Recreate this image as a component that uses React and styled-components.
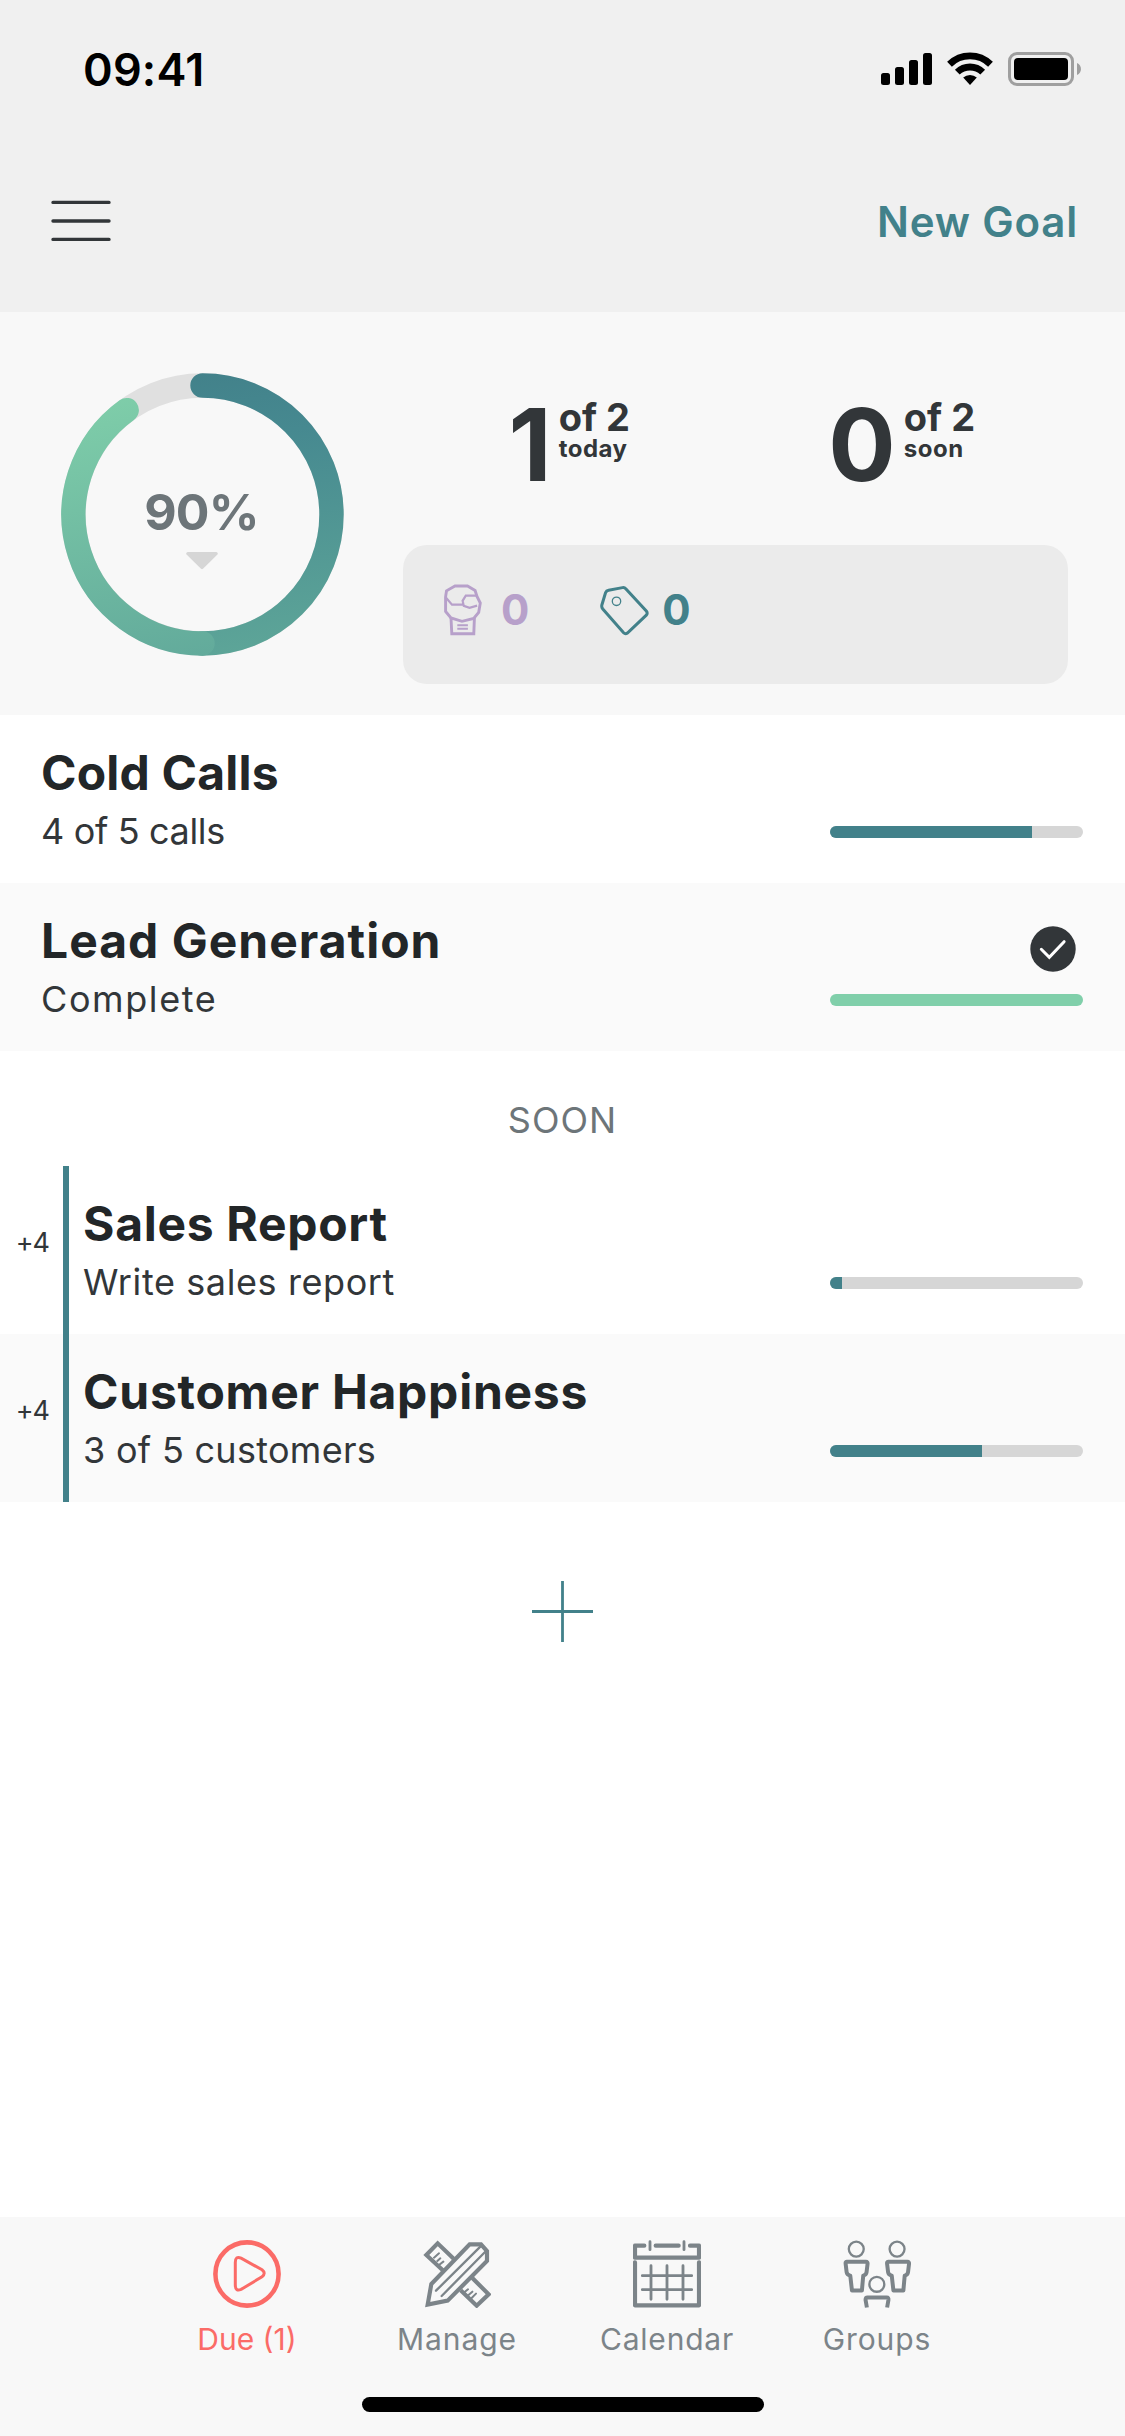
import React from 'react';
import styled, { createGlobalStyle } from 'styled-components';

const teal = '#42818a';
const green = '#80cfaa';

const today = [
  { title: 'Cold Calls', detail: '4 of 5 calls', progress: 80, spacing: 0.2, detailSpacing: -0.35 },
  { title: 'Lead Generation', detail: 'Complete', progress: 100, spacing: 1, detailSpacing: 1.6 },
];

const soon = [
  { title: 'Sales Report', detail: 'Write sales report', progress: 4.7, days: '+4', spacing: 0.7, detailSpacing: 0.6 },
  { title: 'Customer Happiness', detail: '3 of 5 customers', progress: 60, days: '+4', spacing: 0.75, detailSpacing: 0.3 },
];

const StatusIcons = () => (
  <svg width="200" height="34" viewBox="0 0 200 34">
    <rect x="0" y="21" width="9" height="12" rx="2.5" />
    <rect x="14" y="15" width="9" height="18" rx="2.5" />
    <rect x="28" y="8" width="9" height="25" rx="2.5" />
    <rect x="42" y="1" width="9" height="32" rx="2.5" />
    <g fill="none" stroke="#000" strokeWidth="6.8">
      <path d="M68.5 12.3a29.3 29.3 0 0 1 41 0" />
      <path d="M76.3 20.1a18.3 18.3 0 0 1 25.4 0" />
    </g>
    <path d="M82.2 25.6a10.2 10.2 0 0 1 13.6 0L89 33z" />
    <rect x="128.5" y="1.5" width="63" height="31" rx="7.5" fill="none" stroke="#9f9f9f" strokeWidth="3" />
    <rect x="133" y="6" width="54" height="22" rx="4" />
    <path d="M196 11c5.3 2 5.3 10 0 12z" fill="#9f9f9f" />
  </svg>
);

const MenuIcon = () => (
  <svg width="60" height="42" viewBox="0 0 60 42" stroke="#323639" strokeWidth="3.4" strokeLinecap="round">
    <path d="M2 2.4h56M2 21h56M2 39.4h56" />
  </svg>
);

const Ring = () => (
  <svg width="283" height="283" viewBox="0 0 283 283" fill="none" strokeWidth="24.4" strokeLinecap="round">
    <defs>
      <linearGradient id="ringDown" gradientUnits="userSpaceOnUse" x1="120" y1="0" x2="160" y2="283">
        <stop offset="0" stopColor={teal} />
        <stop offset="0.25" stopColor="#468990" />
        <stop offset="1" stopColor="#5da598" />
      </linearGradient>
      <linearGradient id="ringUp" gradientUnits="userSpaceOnUse" x1="160" y1="283" x2="100" y2="0">
        <stop offset="0" stopColor="#62aa9b" />
        <stop offset="1" stopColor={green} />
      </linearGradient>
    </defs>
    <circle cx="141.5" cy="141.5" r="129" stroke="#e0e0e0" />
    <path d="M141.5 12.5a129 129 0 0 1 0 258" stroke="url(#ringDown)" />
    <path d="M141.5 270.5A129 129 0 0 1 65.7 37.1" stroke="url(#ringUp)" />
  </svg>
);

const Caret = () => (
  <svg width="32" height="18" viewBox="0 0 32 18" fill="#d6d6d6">
    <path d="M1.6 0h28.8q2.4 1 .8 2.8L17 16.8q-1 .8-2 0L.8 2.8Q-.8 1 1.6 0z" />
  </svg>
);

const GloveIcon = () => (
  <svg width="40" height="52" viewBox="0 0 40 52" fill="none" stroke="#b7a0ca" strokeWidth="2.9">
    <path d="M12 2h12.5l7.6 4.5L34 12.5l3.3 6.5-1.6 9.3-5 6.2L19 37.3 8 34l-5.4-6.6V12.8l.9-6z" />
    <path d="M8 34l.8 15.8h22L31.4 34" />
    <path d="M2.6 13.2L9 20.7h11.5M34 11.6H22.8l-3.2 5.2 1.2 5.1 5.7 1.9 7.6-2.2" strokeWidth="2.2" />
    <path d="M14.3 41.2h10.6M14.3 44.8h10.6" strokeWidth="1.9" />
  </svg>
);

const TagIcon = () => (
  <svg width="49" height="51" viewBox="0 0 49 51" fill="none" stroke={teal} strokeWidth="3">
    <path d="M8.6 5.2L22.5 2.6q2-.4 3.5 1.3L46.3 26q1.7 2.2 0 4.2L27.4 48q-2 1.6-3.8-.2L2.8 24q-1.4-1.7-1-3.8L5.6 7.6q.8-2 3-2.4z" />
    <circle cx="16.5" cy="16.3" r="4.2" strokeWidth="1.3" />
  </svg>
);

const CheckIcon = () => (
  <svg width="46" height="46" viewBox="0 0 46 46">
    <circle cx="23" cy="23" r="22.7" fill="#323639" />
    <path d="M11.3 23.3l8 8 14.8-15.6" fill="none" stroke="#fff" strokeWidth="3" strokeLinecap="round" />
  </svg>
);

const PlusIcon = () => (
  <svg width="61" height="61" viewBox="0 0 61 61" stroke={teal} strokeWidth="2.8">
    <path d="M30.5 0v61M0 30.5h61" />
  </svg>
);

const DueIcon = () => (
  <svg width="68" height="68" viewBox="0 0 68 68" fill="none" stroke="currentColor">
    <circle cx="34" cy="34" r="31.6" strokeWidth="4.6" />
    <path d="M22.3 22.5q0-7 5.8-4.4L49 29.8q4.4 3.4 0 7L28.1 49.4q-5.8 2.4-5.8-4.4z" strokeWidth="3" />
  </svg>
);

const ManageIcon = () => (
  <svg width="68" height="68" viewBox="17 14 204 204" fill="none" stroke="currentColor" strokeWidth="12.5">
    <path d="M78 106L27 59l34-35 48 46M130 165l48 46 36-34-49-49" />
    <path d="M157 27h34l18 20v30L91 196l-60 12 11-62z" />
    <path d="M56 166L189 34M73 182L206 47" strokeWidth="7" strokeLinecap="round" />
    <path d="M50 67l15-13M60 77l9-8M65 89l13-10M141 171l11-9M151 181l14-12M160 191l16-16" strokeWidth="6" strokeLinecap="round" />
  </svg>
);

const CalendarIcon = () => (
  <svg width="68" height="68" viewBox="221 91 204 204" fill="none" stroke="currentColor" strokeWidth="12.5" strokeLinecap="round" strokeLinejoin="round">
    <path d="M255 108h-28v36h192v-36h-27M289 108h69" />
    <path d="M227 158v129h192V158" />
    <path d="M272 96v24M374 96v24M275 168v101M323 168v101M371 168v101M249 198h148M249 240h148" strokeWidth="8.5" />
  </svg>
);

const GroupsIcon = () => (
  <svg width="68" height="68" viewBox="850 91 205 204" fill="none" stroke="currentColor" strokeWidth="12" strokeLinejoin="round">
    <g strokeWidth="7">
      <circle cx="890" cy="118" r="22.5" />
      <circle cx="1013" cy="118" r="22.5" />
      <circle cx="952" cy="224" r="22.5" />
    </g>
    <path d="M861 156h58q6 0 5 7l-3 25q-1 8-10 10l-4 45h-30l-5-45q-10-2-11-10l-3-25q-1-7 3-7z" />
    <path d="M986 156h58q6 0 5 7l-3 25q-1 8-10 10l-4 45h-30l-5-45q-10-2-11-10l-3-25q-1-7 3-7z" />
    <path d="M922 294l-4-23q0-7 6-7h58q6 0 5 7l-4 23" />
  </svg>
);

const tabs = [
  { label: 'Due (1)', icon: <DueIcon />, active: true, spacing: 0 },
  { label: 'Manage', icon: <ManageIcon />, spacing: 0.9 },
  { label: 'Calendar', icon: <CalendarIcon />, spacing: 0.8 },
  { label: 'Groups', icon: <GroupsIcon />, spacing: 0.9 },
];

const Goal = ({ goal, shaded }) => (
  <GoalRow $shaded={shaded}>
    {goal.days && <Days>{goal.days}</Days>}
    <GoalText $inset={goal.days ? 14 : 41}>
      <GoalTitle $spacing={goal.spacing}>{goal.title}</GoalTitle>
      <GoalDetail $spacing={goal.detailSpacing}>{goal.detail}</GoalDetail>
    </GoalText>
    <GoalStatus>
      {goal.progress === 100 && <CheckIcon />}
      <Track>
        <Fill $done={goal.progress === 100} style={{ width: `${goal.progress}%` }} />
      </Track>
    </GoalStatus>
  </GoalRow>
);

function App() {
  return (
    <Screen>
      <GlobalStyle />
      <Header>
        <StatusBar>
          <Time>09:41</Time>
          <StatusIcons />
        </StatusBar>
        <NavBar>
          <MenuIcon />
          <NewGoal>New Goal</NewGoal>
        </NavBar>
      </Header>

      <Summary>
        <RingWrap>
          <Ring />
          <RingLabel>
            <Percent>90%</Percent>
            <Caret />
          </RingLabel>
        </RingWrap>
        <Stats>
          <Counts>
            <Count $gap={7}>
              <Big>1</Big>
              <CountSide>
                <Total>of 2</Total>
                <When>today</When>
              </CountSide>
            </Count>
            <Count $gap={8}>
              <Big>0</Big>
              <CountSide>
                <Total>of 2</Total>
                <When>soon</When>
              </CountSide>
            </Count>
          </Counts>
          <Panel>
            <Badge $color="#b7a0ca" $gap={18}><GloveIcon />0</Badge>
            <Badge $color={teal} $gap={13}><TagIcon />0</Badge>
          </Panel>
        </Stats>
      </Summary>

      <List>
        {today.map((g, i) => <Goal key={g.title} goal={g} shaded={i % 2 === 1} />)}
        <SectionTitle>SOON</SectionTitle>
        {soon.map((g, i) => <Goal key={g.title} goal={g} shaded={i % 2 === 1} />)}
        <AddButton><PlusIcon /></AddButton>
      </List>

      <Footer>
        <Tabs>
          {tabs.map(t => (
            <Tab key={t.label} $active={t.active}>
              {t.icon}
              <TabLabel $spacing={t.spacing}>{t.label}</TabLabel>
            </Tab>
          ))}
        </Tabs>
        <HomeIndicator />
      </Footer>
    </Screen>
  );
}

export default App;

const GlobalStyle = createGlobalStyle`
  * {
    box-sizing: border-box;
  }
  body {
    margin: 0;
    background: #fff;
    font-family: Inter, "Liberation Sans", sans-serif;
  }
  svg {
    display: block;
    flex-shrink: 0;
  }
`;

const Screen = styled.div`
  width: 1125px;
  height: 2436px;
  display: flex;
  flex-direction: column;
  background: #fff;
  overflow: hidden;
`;

const Header = styled.header`
  height: 312px;
  background: #f0f0f0;
`;

const StatusBar = styled.div`
  height: 138px;
  padding: 0 44px 0 83px;
  display: flex;
  align-items: center;
  justify-content: space-between;
`;

const Time = styled.span`
  font-size: 45px;
  font-weight: 600;
  letter-spacing: 0.2px;
  color: #000;
`;

const NavBar = styled.nav`
  height: 174px;
  padding: 0 47px 8px 51px;
  display: flex;
  align-items: center;
  justify-content: space-between;
`;

const NewGoal = styled.a`
  padding-top: 1px;
  font-size: 42px;
  font-weight: 600;
  letter-spacing: 0.8px;
  color: ${teal};
`;

const Summary = styled.section`
  height: 403px;
  padding: 0 57px 0 61px;
  display: flex;
  gap: 59px;
  background: #f8f8f8;
`;

const RingWrap = styled.div`
  display: grid;
  margin-top: 61px;
  height: 283px;
  > * {
    grid-area: 1 / 1;
  }
`;

const RingLabel = styled.div`
  display: flex;
  flex-direction: column;
  align-items: center;
  padding: 109px 2px 0 0;
  gap: 10px;
`;

const Percent = styled.span`
  font-size: 50px;
  line-height: 60px;
  font-weight: 700;
  letter-spacing: -0.8px;
  color: #6d7579;
`;

const Stats = styled.div`
  flex: 1;
`;

const Counts = styled.div`
  display: flex;
  margin-top: 83px;
`;

const Count = styled.div`
  flex: 1;
  display: flex;
  justify-content: center;
  gap: ${({ $gap }) => $gap}px;
  color: #323639;
`;

const Big = styled.span`
  font-size: 100px;
  line-height: 100px;
  font-weight: 700;
`;

const CountSide = styled.div`
  display: flex;
  flex-direction: column;
  padding-top: 3px;
`;

const Total = styled.span`
  font-size: 38px;
  line-height: 38px;
  font-weight: 700;
`;

const When = styled.span`
  font-size: 24px;
  line-height: 26px;
  font-weight: 700;
  letter-spacing: 0.5px;
`;

const Panel = styled.div`
  height: 139px;
  margin-top: 50px;
  padding: 0 40px 9px;
  display: flex;
  align-items: center;
  gap: 71px;
  border-radius: 24px;
  background: #ebebeb;
`;

const Badge = styled.div`
  display: flex;
  align-items: center;
  gap: ${({ $gap }) => $gap}px;
  font-size: 42px;
  line-height: 52px;
  font-weight: 700;
  color: ${({ $color }) => $color};
`;

const List = styled.main`
  flex: 1;
`;

const GoalRow = styled.div`
  height: 168px;
  display: flex;
  background: ${({ $shaded }) => $shaded ? '#fafafa' : '#fff'};
`;

const Days = styled.div`
  width: 69px;
  padding: 59px 14px 0 0;
  border-right: 6px solid ${teal};
  text-align: right;
  font-size: 27px;
  line-height: 36px;
  letter-spacing: -1px;
  color: #323639;
`;

const GoalText = styled.div`
  flex: 1;
  padding: 28px 0 0 ${({ $inset }) => $inset}px;
`;

const GoalTitle = styled.div`
  font-size: 48px;
  line-height: 60px;
  font-weight: 700;
  letter-spacing: ${({ $spacing }) => $spacing}px;
  color: #222628;
`;

const GoalDetail = styled.div`
  margin-top: 4px;
  font-size: 36px;
  line-height: 48px;
  letter-spacing: ${({ $spacing }) => $spacing}px;
  color: #323639;
`;

const GoalStatus = styled.div`
  width: 295px;
  padding: 0 42px 45px 0;
  display: flex;
  flex-direction: column;
  align-items: flex-end;
  justify-content: flex-end;
  > svg {
    margin: 0 7px 22px 0;
  }
`;

const Track = styled.div`
  width: 253px;
  height: 12px;
  border-radius: 6px;
  background: #d6d6d6;
  overflow: hidden;
`;

const Fill = styled.div`
  height: 100%;
  background: ${({ $done }) => $done ? green : teal};
`;

const SectionTitle = styled.h2`
  height: 115px;
  margin: 0;
  padding-top: 24px;
  text-align: center;
  font-size: 36px;
  line-height: 91px;
  font-weight: 400;
  letter-spacing: 1px;
  color: #6d7579;
`;

const AddButton = styled.div`
  display: flex;
  justify-content: center;
  padding-top: 79px;
`;

const Footer = styled.footer`
  height: 219px;
  background: #f8f8f8;
`;

const Tabs = styled.div`
  display: flex;
  width: 840px;
  margin: 0 142px;
  padding-top: 23px;
`;

const Tab = styled.div`
  flex: 1;
  display: flex;
  flex-direction: column;
  align-items: center;
  gap: 13px;
  color: ${({ $active }) => $active ? '#fb6b67' : '#7c8489'};
`;

const TabLabel = styled.span`
  font-size: 30px;
  line-height: 36px;
  letter-spacing: ${({ $spacing }) => $spacing}px;
`;

const HomeIndicator = styled.div`
  width: 402px;
  height: 15px;
  margin: 40px auto 0;
  border-radius: 8px;
  background: #000;
`;
